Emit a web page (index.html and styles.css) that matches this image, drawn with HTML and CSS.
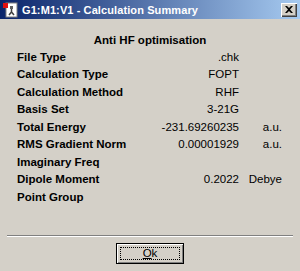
FILE: index.html
```html
<!DOCTYPE html>
<html lang="en">
<head>
    <meta charset="UTF-8">
    <title>Calculation Summary</title>
    <link rel="stylesheet" href="styles.css">
</head>
<body>
    <div class="window">
        <!-- Title bar -->
        <div class="titlebar">
            <svg class="app-icon" width="16" height="16" viewBox="0 0 16 16">
                <rect x="3" y="1" width="11" height="14" fill="#fff" stroke="#808080"/>
                <rect x="0" y="1" width="5" height="5" fill="#e01010"/>
                <rect x="7" y="4" width="3" height="3" fill="#606060"/>
                <path d="M8.5 7 L8.5 10 M6 13 L8.5 10 L11 13" stroke="#404040" stroke-width="1.5" fill="none"/>
            </svg>
            <span class="title">G1:M1:V1 - Calculation Summary</span>
            <span class="close">
                <svg width="8" height="7" viewBox="0 0 8 7">
                    <path d="M0 0 L2 0 L4 2 L6 0 L8 0 L5 3.5 L8 7 L6 7 L4 5 L2 7 L0 7 L3 3.5 Z" fill="#000"/>
                </svg>
            </span>
        </div>

        <div class="content">
            <div class="heading">Anti HF optimisation</div>

            <div class="summary">
                <div class="label">File Type</div><div class="value">.chk</div><div class="unit"></div>
                <div class="label">Calculation Type</div><div class="value">FOPT</div><div class="unit"></div>
                <div class="label">Calculation Method</div><div class="value">RHF</div><div class="unit"></div>
                <div class="label">Basis Set</div><div class="value">3-21G</div><div class="unit"></div>
                <div class="label">Total Energy</div><div class="value">-231.69260235</div><div class="unit">a.u.</div>
                <div class="label">RMS Gradient Norm</div><div class="value">0.00001929</div><div class="unit">a.u.</div>
                <div class="label">Imaginary Freq</div><div class="value"></div><div class="unit"></div>
                <div class="label">Dipole Moment</div><div class="value">0.2022</div><div class="unit">Debye</div>
                <div class="label">Point Group</div><div class="value"></div><div class="unit"></div>
            </div>

            <div class="separator"></div>

            <div class="actions">
                <button class="ok-button"><span class="focus-rect"><u>O</u>k</span></button>
            </div>
        </div>
    </div>
</body>
</html>
```

FILE: styles.css
```css
body {
    margin: 0;
    font-family: "Liberation Sans", Arial, sans-serif;
    background-color: #d4d0c8;
}

.window {
    width: 300px;
    height: 271px;
    background-color: #d4d0c8;
    overflow: hidden;
}

.titlebar {
    height: 19px;
    display: flex;
    align-items: center;
    background: linear-gradient(to right, #0a246a, #a6caf0);
    padding-left: 3px;
    padding-right: 3px;
}

.app-icon {
    flex: none;
}

.title {
    margin-left: 3px;
    color: #fff;
    font-weight: bold;
    font-size: 11px;
    letter-spacing: 0.1px;
    flex: 1;
    white-space: nowrap;
}

.close {
    width: 16px;
    height: 14px;
    box-sizing: border-box;
    background-color: #d4d0c8;
    display: flex;
    align-items: center;
    justify-content: center;
    box-shadow: inset 1px 1px #fff, inset -1px -1px #404040, inset -2px -2px #808080;
}

.content {
    padding-top: 14px;
}

.heading {
    height: 15px;
    line-height: 15px;
    text-align: center;
    font-weight: bold;
    font-size: 11.5px;
}

.summary {
    display: grid;
    grid-template-columns: 142px 80px 43px;
    grid-auto-rows: 17.5px;
    align-items: center;
    padding-left: 17px;
    font-size: 11.5px;
}

.label {
    font-weight: bold;
    white-space: nowrap;
}

.value {
    text-align: right;
}

.unit {
    text-align: right;
}

.separator {
    margin: 29px 7px 0 7px;
    border-top: 1px solid #808080;
    border-bottom: 1px solid #fff;
}

.actions {
    display: flex;
    justify-content: center;
    margin-top: 6px;
}

.ok-button {
    width: 68px;
    height: 21px;
    padding: 0;
    background-color: #d4d0c8;
    border: 1px solid #000;
    box-shadow: inset 1px 1px #fff, inset -1px -1px #808080;
    font-family: "Liberation Sans", Arial, sans-serif;
    font-size: 11.5px;
    color: #000;
    display: flex;
    align-items: stretch;
}

.focus-rect {
    flex: 1;
    margin: 3px;
    border: 1px dotted #000;
    display: flex;
    align-items: center;
    justify-content: center;
}
```
